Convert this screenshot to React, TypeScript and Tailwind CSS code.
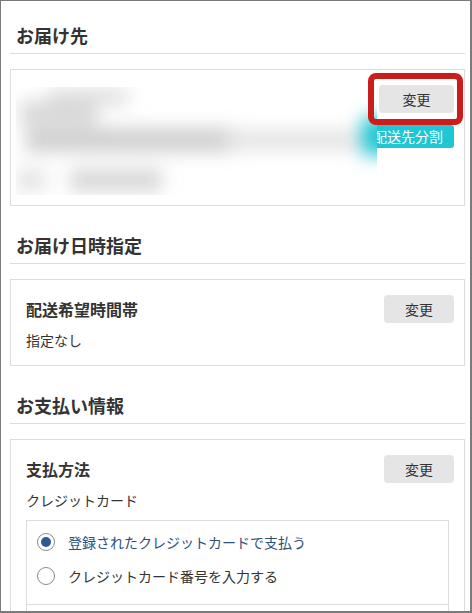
import { ReactNode } from "react";

function SectionTitle({ children, className = "" }: { children: ReactNode; className?: string }) {
  return (
    <h2
      className={`border-b border-[#dcdcdc] px-[6px] pb-[5px] text-[18px] leading-[26px] font-bold text-[#333] ${className}`}
    >
      {children}
    </h2>
  );
}

function ChangeButton({ wide = false }: { wide?: boolean }) {
  return (
    <button
      type="button"
      className={`flex h-[28px] shrink-0 items-center justify-center rounded-[4px] bg-[#e5e5e5] text-[14px] text-[#333] ${
        wide ? "w-[75px]" : "w-[70px]"
      }`}
    >
      変更
    </button>
  );
}

function Radio({ checked, label }: { checked?: boolean; label: string }) {
  return (
    <label className="flex h-[34px] items-center gap-[13px]">
      <span className="flex size-[18px] items-center justify-center rounded-full border border-[#8a8a8a] bg-white">
        {checked && <span className="size-[10px] rounded-full bg-[#2b5a8e]" />}
      </span>
      <span className={`text-[14px] ${checked ? "text-[#2d4f7c]" : "text-[#333]"}`}>{label}</span>
    </label>
  );
}

export default function App() {
  return (
    <div className="h-[613px] w-[472px] overflow-hidden border-t border-r-2 border-b-2 border-l border-[#7b7b7b] bg-white pt-[21px] pr-[5px] pl-[9px] font-['Noto_Sans_CJK_JP','Noto_Sans',sans-serif] text-[#333]">
      {/* お届け先 */}
      <SectionTitle>お届け先</SectionTitle>
      <div className="mt-[15px] flex border border-[#dcdcdc] pt-[15px] pr-[10px] pb-[10px] pl-[5px]">
        {/* blurred address */}
        <div className="relative z-10 mt-[2px] h-[108px] w-[361px] shrink-0 overflow-hidden bg-white">
          <div className="absolute inset-0 blur-[9px]">
            <div className="absolute top-[2px] left-[32px] h-[16px] w-[80px] bg-[#dedede]" />
            <div className="absolute top-[14px] left-[4px] h-[24px] w-[78px] bg-[#d8d8d8]" />
            <div className="absolute top-[41px] left-[10px] h-[24px] w-[210px] bg-[#cfcfcf]" />
            <div className="absolute top-[43px] left-[210px] h-[20px] w-[140px] bg-[#e4e4e4]" />
            <div className="absolute top-[82px] left-[0px] h-[22px] w-[30px] bg-[#e4e4e4]" />
            <div className="absolute top-[82px] left-[54px] h-[22px] w-[92px] bg-[#d6d6d6]" />
            <div className="absolute top-[30px] left-[346px] h-[38px] w-[40px] bg-[#1fc7d4]" />
          </div>
        </div>
        <div className="-ml-[15px] flex flex-1 flex-col items-end">
          <div className="relative">
            <ChangeButton wide />
            <div className="absolute -top-[12px] -right-[9px] -bottom-[12px] -left-[11px] z-20 rounded-[8px] border-[6px] border-[#cc1d1d]" />
          </div>
          <button
            type="button"
            className="mt-[12px] flex h-[23px] w-[92px] items-center justify-center rounded-[3px] bg-[#1fc6d3] text-[14px] text-white"
          >
            配送先分割
          </button>
        </div>
      </div>

      {/* お届け日時指定 */}
      <SectionTitle className="mt-[26px]">お届け日時指定</SectionTitle>
      <div className="mt-[15px] border border-[#dcdcdc] px-[15px] pt-[15px] pb-[15px]">
        <div className="flex h-[28px] items-center justify-between">
          <span className="text-[16px] font-bold">配送希望時間帯</span>
          <div className="-mr-[5px]">
            <ChangeButton />
          </div>
        </div>
        <p className="mt-[7px] text-[14px] leading-[20px]">指定なし</p>
      </div>

      {/* お支払い情報 */}
      <SectionTitle className="mt-[26px]">お支払い情報</SectionTitle>
      <div className="mt-[15px] border border-[#dcdcdc] px-[15px] pt-[15px] pb-[15px]">
        <div className="flex h-[28px] items-center justify-between">
          <span className="text-[16px] font-bold">支払方法</span>
          <div className="-mr-[5px]">
            <ChangeButton />
          </div>
        </div>
        <p className="mt-[7px] text-[14px] leading-[20px]">クレジットカード</p>
        <div className="mt-[10px] border border-[#dcdcdc]">
          <div className="px-[10px] pt-[4px]">
            <Radio checked label="登録されたクレジットカードで支払う" />
            <Radio label="クレジットカード番号を入力する" />
          </div>
          <div className="mt-[11px] h-[60px] border-t border-[#dcdcdc]" />
        </div>
      </div>
    </div>
  );
}
